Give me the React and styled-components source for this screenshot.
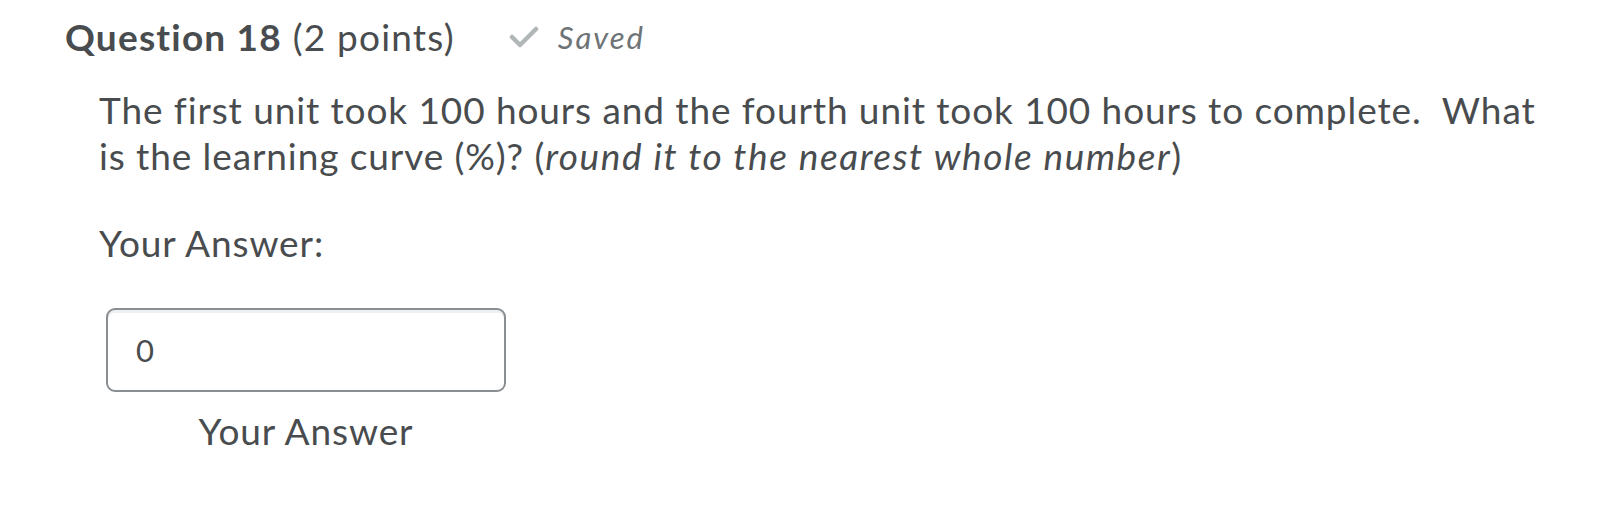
import React from "react";
import styled, { createGlobalStyle } from "styled-components";

const GlobalStyle = createGlobalStyle`
  body {
    margin: 0;
    background: #ffffff;
    font-family: Lato, "Open Sans", sans-serif;
    color: #494c4e;
    font-variant-ligatures: none;
  }
`;

const Page = styled.div`
  padding: 13px 0 0 65px;
`;

const HeadRow = styled.div`
  display: flex;
  align-items: center;
  gap: 54px;
`;

const Title = styled.h2`
  margin: 0;
  font-size: 37px;
  font-weight: 400;
  line-height: 48px;
  letter-spacing: 1.2px;
  color: #494c4e;
  strong {
    font-weight: 700;
  }
`;

const SavedTag = styled.span`
  display: flex;
  align-items: center;
  gap: 19px;
  font-size: 31px;
  font-style: italic;
  letter-spacing: 2px;
  color: #6e7376;
`;

const Body = styled.div`
  padding: 26px 0 0 34px;
  font-size: 37px;
  line-height: 48px;
  letter-spacing: 0.9px;
`;

const Question = styled.p`
  margin: 0;
  max-width: 1450px;
  line-height: 46px;
  em {
    font-style: italic;
    letter-spacing: 1.6px;
  }
`;

const Label = styled.div`
  margin-top: 40px;
`;

const Field = styled.div`
  display: flex;
  flex-direction: column;
  align-items: center;
  width: 400px;
  margin: 41px 0 0 7px;
`;

const Input = styled.input`
  box-sizing: border-box;
  width: 400px;
  height: 84px;
  padding: 0 28px;
  border: 2px solid #8a8e91;
  border-radius: 9px;
  box-shadow: inset 0 3px 0 0 #eef0f1;
  font-family: Lato, "Open Sans", sans-serif;
  font-size: 31px;
  color: #494c4e;
  outline: none;
`;

const Caption = styled.div`
  margin-top: 15px;
`;

export default function App() {
  return (
    <Page>
      <GlobalStyle />
      <HeadRow>
        <Title>
          <strong>Question 18</strong> (2 points)
        </Title>
        <SavedTag>
          <svg width="30" height="22" viewBox="0 0 30 22">
            <polyline
              points="3,11 11,19 27,3"
              fill="none"
              stroke="#b1b6b9"
              strokeWidth="4.5"
              strokeLinecap="round"
              strokeLinejoin="round"
            />
          </svg>
          Saved
        </SavedTag>
      </HeadRow>
      <Body>
        <Question>
          The first unit took 100 hours and the fourth unit took 100 hours to
          complete.&nbsp; What is the learning curve (%)? (
          <em>round it to the nearest whole number</em>)
        </Question>
        <Label>Your Answer:</Label>
        <Field>
          <Input defaultValue="0" aria-label="Your Answer" />
          <Caption>Your Answer</Caption>
        </Field>
      </Body>
    </Page>
  );
}
